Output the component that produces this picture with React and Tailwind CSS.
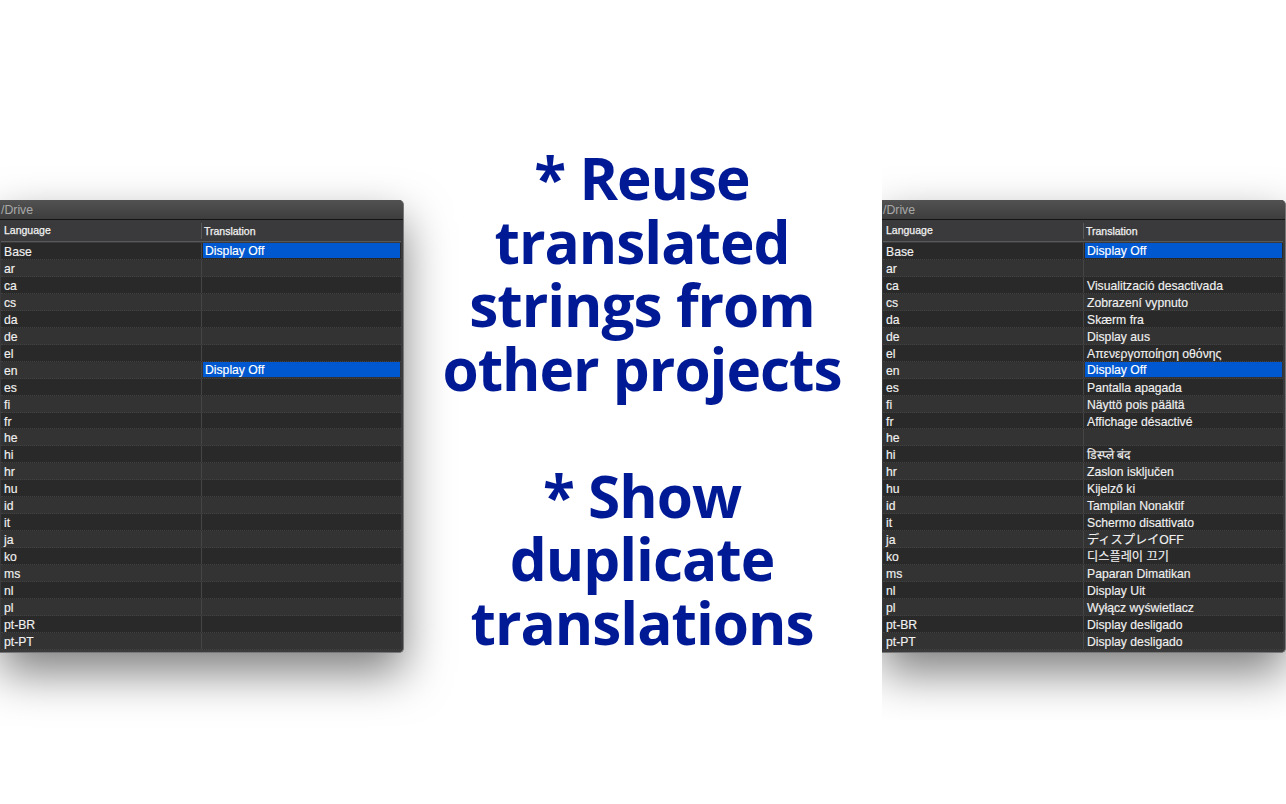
const rows = [
  ['Base', 'Display Off', true],
  ['ar', ''],
  ['ca', 'Visualització desactivada'],
  ['cs', 'Zobrazení vypnuto'],
  ['da', 'Skærm fra'],
  ['de', 'Display aus'],
  ['el', 'Απενεργοποίηση οθόνης'],
  ['en', 'Display Off', true],
  ['es', 'Pantalla apagada'],
  ['fi', 'Näyttö pois päältä'],
  ['fr', 'Affichage désactivé'],
  ['he', ''],
  ['hi', 'डिस्प्ले बंद'],
  ['hr', 'Zaslon isključen'],
  ['hu', 'Kijelző ki'],
  ['id', 'Tampilan Nonaktif'],
  ['it', 'Schermo disattivato'],
  ['ja', 'ディスプレイOFF'],
  ['ko', '디스플레이 끄기'],
  ['ms', 'Paparan Dimatikan'],
  ['nl', 'Display Uit'],
  ['pl', 'Wyłącz wyświetlacz'],
  ['pt-BR', 'Display desligado'],
  ['pt-PT', 'Display desligado'],
];

function Panel({ filled }) {
  return (
    <div className="w-[404px] h-[453px] rounded-r-[5px] bg-[#3a3a3c] shadow-[0_20px_46px_rgba(0,0,0,0.5)] flex flex-col overflow-hidden border-r border-b border-[#777777]">
      <div className="h-[20px] shrink-0 flex items-center pl-px pt-px text-[12.3px] text-[#a8a8a8] bg-gradient-to-b from-[#525252] to-[#3d3d3d] border-b border-[#141414]">
        /Drive
      </div>
      <div className="h-[22px] shrink-0 flex items-center text-[10.5px] font-normal text-[#f2f2f2] [-webkit-text-stroke:0.25px] border-b border-[#585858] ml-px mr-[2px]">
        <div className="w-[200px] pl-[3px]">Language</div>
        <div className="pl-[2px] border-l border-[#585858] h-[16px] leading-[16px]">Translation</div>
      </div>
      <div className="flex-1 flex flex-col pt-[1px] ml-px mr-[2px]">
        {rows.map(([lang, text, selected], i) => (
          <div
            key={lang}
            className={`h-[16.96px] shrink-0 flex text-[12.2px] leading-[19px] text-[#f0f0f0] [-webkit-text-stroke:0.15px] border-b border-dotted border-[#414141] ${i % 2 === 0 ? 'bg-[#292929]' : 'bg-[#333333]'}`}
          >
            <div className="w-[200px] pl-[3px]">{lang}</div>
            <div className="flex-1 border-l border-[#454545] pl-px pr-[1px]">
              {selected ? (
                <div className="h-[15px] bg-[#0058d0] text-white pl-[2px] leading-[17px]">{text}</div>
              ) : (
                <div className="pl-[2px] whitespace-nowrap">{filled ? text : ''}</div>
              )}
            </div>
          </div>
        ))}
      </div>
    </div>
  );
}

export default function App() {
  return (
    <div className="w-[1286px] h-[804px] bg-white flex overflow-hidden font-['Liberation_Sans','Noto_Sans_CJK_JP','Noto_Sans_CJK_KR',sans-serif]">
      <div className="w-[404px] shrink-0 pt-[200px]">
        <Panel filled={false} />
      </div>
      <div className="w-[476px] shrink-0 pt-[146px] text-center text-[#001a96] text-[58.5px] leading-[63.5px] font-bold font-['Open_Sans',sans-serif] tracking-[-1px]">
        <div>* Reuse</div>
        <div>translated</div>
        <div>strings from</div>
        <div>other projects</div>
        <div className="h-[63.5px]" />
        <div>* Show</div>
        <div>duplicate</div>
        <div>translations</div>
      </div>
      <div className="w-[404px] ml-[2px] h-[720px] shrink-0 pt-[200px] overflow-hidden bg-white">
        <Panel filled />
      </div>
    </div>
  );
}
